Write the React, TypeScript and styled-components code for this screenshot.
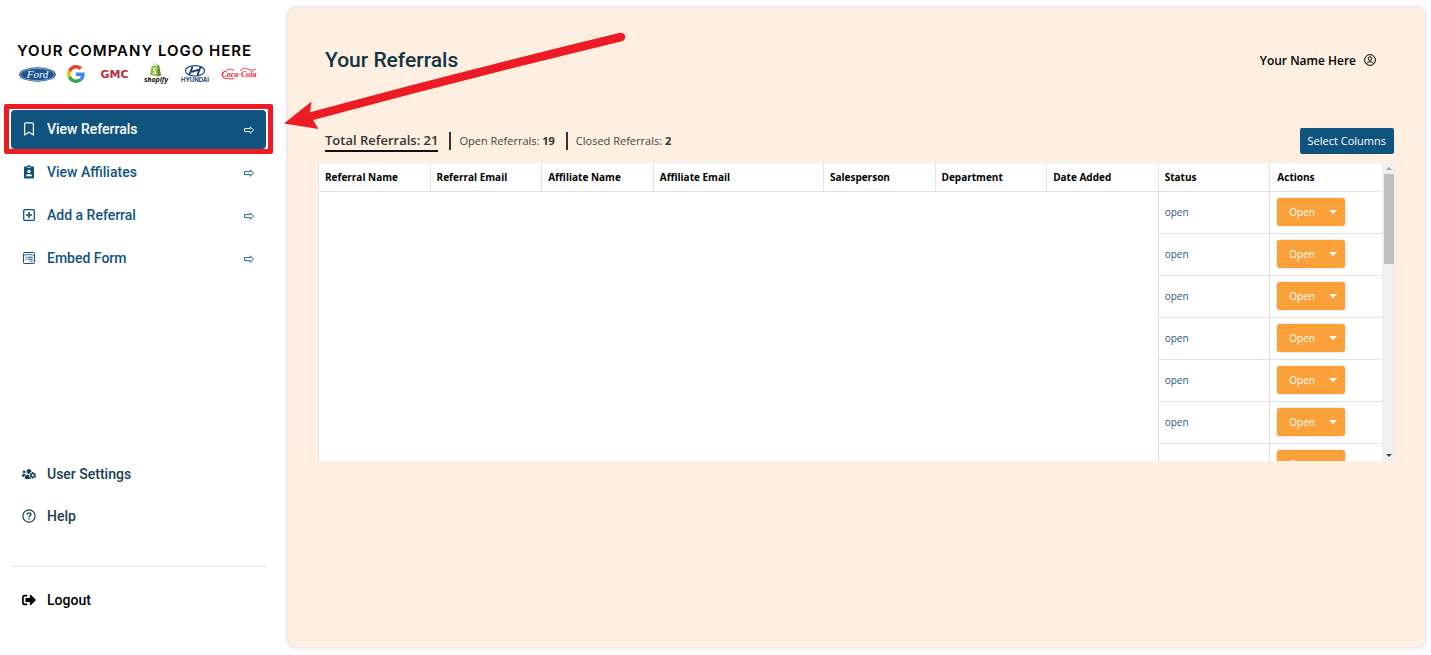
import React from "react";
import styled, { createGlobalStyle } from "styled-components";
import { FaUsersCog, FaSignOutAlt } from "react-icons/fa";

const GlobalStyle = createGlobalStyle`
  *, *::before, *::after { box-sizing: border-box; }
  body { margin: 0; background: #ffffff; font-family: "Open Sans", "Noto Sans", sans-serif; }
`;

const Page = styled.div`
  position: relative;
  display: flex;
  min-height: 100vh;
`;

const Sidebar = styled.aside`
  display: flex;
  flex-direction: column;
  flex: 0 0 288px;
  padding: 41px 22px 35px 11px;
`;

const Brand = styled.div`
  display: flex;
  flex-direction: column;
  gap: 2px;
  height: 69px;
  padding-left: 6px;
`;

const BrandName = styled.div`
  font: 600 15px/20px Inter, sans-serif;
  letter-spacing: 1px;
  color: #000000;
  white-space: nowrap;
`;

const BrandLogos = styled.div`
  display: flex;
  align-items: center;
  justify-content: space-between;
  height: 22px;
  padding: 0 9px 0 2px;
`;

const NavList = styled.nav<{ $bottom?: boolean }>`
  display: flex;
  flex-direction: column;
  gap: ${(p) => (p.$bottom ? 3 : 4)}px;
  margin-top: ${(p) => (p.$bottom ? "auto" : "0")};
`;

const NavItem = styled.a<{ $active?: boolean; $tone?: string }>`
  position: relative;
  display: flex;
  align-items: center;
  height: 39px;
  padding: 0 11px;
  border-radius: 4px;
  background: ${(p) => (p.$active ? "#11537f" : "transparent")};
  color: ${(p) => (p.$active ? "#ffffff" : p.$tone || "#11537f")};
  font: 500 14px/20px Roboto, sans-serif;
  text-decoration: none;
`;

const NavIcon = styled.span`
  display: flex;
  width: 14px;
  justify-content: center;
  margin-right: 11px;
  padding-bottom: 2px;
`;

const NavLabel = styled.span`
  flex: 1;
  padding-bottom: 2px;
`;

const Highlight = styled.span`
  position: absolute;
  inset: -6px -7px -5px -7px;
  border: 5px solid #ed1c24;
  border-radius: 2px;
  pointer-events: none;
`;

const Divider = styled.hr`
  width: 100%;
  margin: 30px 0 14px;
  border: 0;
  border-top: 1px solid #e6e6e6;
`;

const Main = styled.main`
  flex: 1;
  min-width: 0;
  margin: 8px 6px 8px 0;
  padding: 36px 30px;
  border-radius: 8px;
  background: #feefe0;
  box-shadow: 0 0 4px rgba(40, 40, 80, 0.25);
`;

const Header = styled.header`
  display: flex;
  align-items: center;
  justify-content: space-between;
  height: 32px;
  padding: 0 19px 0 7px;
`;

const Title = styled.h1`
  margin: 0;
  font: 500 21px/32px Roboto, sans-serif;
  color: #0f3446;
`;

const UserName = styled.div`
  display: flex;
  align-items: center;
  gap: 8px;
  font-size: 12px;
  font-weight: 600;
  color: #000000;
`;

const Toolbar = styled.div`
  display: flex;
  align-items: center;
  justify-content: space-between;
  height: 26px;
  margin: 52px 0 8px;
  padding: 0 1px 0 7px;
`;

const Stats = styled.div`
  display: flex;
  align-items: center;
`;

const Total = styled.strong`
  border-bottom: 2px solid #111111;
  font-size: 13px;
  font-weight: 600;
  line-height: 19px;
  color: #333333;
`;

const Stat = styled.span`
  margin-left: 11px;
  padding-left: 8px;
  border-left: 2px solid #333333;
  font-size: 11px;
  line-height: 18px;
  color: #444444;

  b { color: #333333; }
`;

const SelectColumns = styled.button`
  height: 26px;
  padding: 0 8px;
  border: 0;
  border-radius: 2px;
  background: #11537f;
  color: #ffffff;
  font: 400 11px/18px "Open Sans", sans-serif;
`;

const TableFrame = styled.div`
  display: flex;
  height: 299px;
`;

const TableViewport = styled.div`
  flex: 1;
  min-width: 0;
  overflow: hidden auto;
  scrollbar-width: none;
  background: #ffffff;
`;

const Table = styled.table`
  width: 100%;
  table-layout: fixed;
  border-collapse: separate;
  border-spacing: 0;
  border-left: 1px solid #e4e4e4;
  font-size: 10px;
`;

const Th = styled.th<{ $wide?: boolean }>`
  width: ${(p) => (p.$wide ? "16%" : "auto")};
  height: 30px;
  padding: 0 6px;
  border-right: 1px solid #e4e4e4;
  border-bottom: 1px solid #e4e4e4;
  border-top: 1px solid #ececec;
  font-size: 10px;
  text-align: left;
  color: #000000;
  white-space: nowrap;

  &:last-child { border-right: 0; padding-left: 7px; }
`;

const Td = styled.td`
  height: 42px;
  padding: 0 6px 2px;
  border-right: 1px solid #dedede;
  border-bottom: 1px solid #e4e4e4;
  color: #1f5a85;

  &:last-child { border-right: 0; padding-left: 7px; }
`;

const SplitButton = styled.div`
  display: flex;
  width: 68px;
  height: 28px;
  border-radius: 3px;
  background: #fba139;
  box-shadow: 0 0 2px rgba(0, 0, 0, 0.3);
`;

const SplitPart = styled.button<{ $grow?: boolean }>`
  display: flex;
  flex: ${(p) => (p.$grow ? "1" : "0 0 24px")};
  align-items: center;
  justify-content: ${(p) => (p.$grow ? "flex-start" : "center")};
  padding: ${(p) => (p.$grow ? "0 0 0 12px" : "0")};
  border: 0;
  background: none;
  color: #ffffff;
  font: 400 10px/16px "Open Sans", sans-serif;
`;

const ScrollTrack = styled.div`
  display: flex;
  flex-direction: column;
  align-items: center;
  width: 13px;
  background: #f0f0f0;
`;

const ScrollArrow = styled.span<{ $down?: boolean }>`
  display: flex;
  align-items: center;
  height: 12px;
  margin-top: ${(p) => (p.$down ? "auto" : "0")};
  color: ${(p) => (p.$down ? "#444444" : "#a0a0a0")};
`;

const ScrollThumb = styled.div`
  width: 10px;
  height: 90px;
  background: #c0c0c0;
`;

const Pointer = styled.svg`
  position: absolute;
  left: 284px;
  top: 30px;
  pointer-events: none;
`;

const ArrowRight = () => (
  <svg width="12" height="10" viewBox="0 0 12 10" fill="none" stroke="currentColor" strokeWidth="0.9" strokeLinejoin="miter" aria-hidden="true">
    <path d="M1.5 3.6H7.2V1.9L10.6 5.1L7.2 8.3V6.6H1.5Z" />
  </svg>
);

const Bookmark = () => (
  <svg width="12" height="14" viewBox="0 0 12 14" fill="none" stroke="currentColor" strokeWidth="1.2" strokeLinejoin="round" aria-hidden="true">
    <path d="M1.6 2C1.6 1.3 2 0.9 2.6 0.9H9.4C10 0.9 10.4 1.3 10.4 2V13L6 10.2L1.6 13Z" />
  </svg>
);

const Badge = () => (
  <svg width="12" height="14" viewBox="0 0 12 14" aria-hidden="true">
    <path d="M2 1.5H4.2V0.4H7.8V1.5H10C10.7 1.5 11 1.9 11 2.5V12.6C11 13.2 10.7 13.6 10 13.6H2C1.3 13.6 1 13.2 1 12.6V2.5C1 1.9 1.3 1.5 2 1.5Z" fill="currentColor" />
    <path d="M4.4 2.6H7.6" stroke="#ffffff" strokeWidth="0.8" />
    <circle cx="6" cy="6.4" r="1.7" fill="#ffffff" />
    <path d="M2.9 11.3C2.9 9.6 4.2 8.9 6 8.9S9.1 9.6 9.1 11.3Z" fill="#ffffff" />
  </svg>
);

const PlusSquare = () => (
  <svg width="12" height="12" viewBox="0 0 12 12" fill="none" stroke="currentColor" strokeWidth="1.3" aria-hidden="true">
    <rect x="0.7" y="0.7" width="10.6" height="10.6" rx="1" />
    <path d="M6 3V9M3 6H9" strokeWidth="1.6" />
  </svg>
);

const FormIcon = () => (
  <svg width="12" height="12" viewBox="0 0 12 12" fill="none" stroke="currentColor" strokeWidth="1" aria-hidden="true">
    <rect x="0.5" y="0.5" width="11" height="11" rx="1" />
    <path d="M1 3H4L5 2L6 3L7 2L8 3H11" strokeWidth="0.8" />
    <path d="M2.4 5.2H3.6M4.5 5.2H9.7M2.4 7.2H3.6M4.5 7.2H9.7M7 9.2H9.7" />
  </svg>
);

const HelpCircle = () => (
  <svg width="14" height="14" viewBox="0 0 14 14" fill="none" stroke="currentColor" strokeWidth="1.2" aria-hidden="true">
    <circle cx="7" cy="7" r="6.1" />
    <path d="M5.1 5.7C5.1 4.5 5.9 3.9 7 3.9C8.1 3.9 8.9 4.5 8.9 5.5C8.9 6.8 7 6.8 7 8.3" strokeWidth="1.4" />
    <path d="M7 9.2V10.6" strokeWidth="1.5" />
  </svg>
);

const UserCircle = () => (
  <svg width="12" height="12" viewBox="0 0 12 12" fill="none" stroke="currentColor" strokeWidth="1" aria-hidden="true">
    <circle cx="6" cy="6" r="5.4" />
    <circle cx="6" cy="4.6" r="1.8" />
    <path d="M2.6 9.8C3.2 8.2 4.4 7.8 6 7.8S8.8 8.2 9.4 9.8" />
  </svg>
);

const Caret = ({ up = false, size = 8 }: { up?: boolean; size?: number }) => (
  <svg width={size} height={size / 2} viewBox="0 0 8 4" fill="currentColor" aria-hidden="true">
    <path d={up ? "M0 4L4 0L8 4Z" : "M0 0H8L4 4Z"} />
  </svg>
);

const Ford = () => (
  <svg width="37" height="15" viewBox="0 0 37 15">
    <ellipse cx="18.5" cy="7.5" rx="18.3" ry="7.2" fill="#1d5592" />
    <ellipse cx="18.5" cy="7.5" rx="17" ry="6.1" fill="none" stroke="#c5d6e6" strokeWidth="0.6" />
    <text x="18.5" y="11" textAnchor="middle" fontFamily="Liberation Serif, serif" fontStyle="italic" fontWeight="400" fontSize="11" fill="#ffffff">Ford</text>
  </svg>
);

const Google = () => (
  <svg width="18" height="18" viewBox="0 0 48 48">
    <path fill="#EA4335" d="M24 9.5c3.54 0 6.71 1.22 9.21 3.6l6.85-6.85C35.9 2.38 30.47 0 24 0 14.62 0 6.51 5.38 2.56 13.22l7.98 6.19C12.43 13.72 17.74 9.5 24 9.5z" />
    <path fill="#4285F4" d="M46.98 24.55c0-1.57-.15-3.09-.38-4.55H24v9.02h12.94c-.58 2.96-2.26 5.48-4.78 7.18l7.73 6c4.51-4.18 7.09-10.36 7.09-17.65z" />
    <path fill="#FBBC05" d="M10.53 28.59c-.48-1.45-.76-2.99-.76-4.59s.27-3.14.76-4.59l-7.98-6.19C.92 16.46 0 20.12 0 24c0 3.88.92 7.54 2.56 10.78l7.97-6.19z" />
    <path fill="#34A853" d="M24 48c6.48 0 11.93-2.13 15.89-5.81l-7.73-6c-2.15 1.45-4.92 2.3-8.16 2.3-6.26 0-11.57-4.22-13.47-9.91l-7.98 6.19C6.51 42.62 14.62 48 24 48z" />
  </svg>
);

const Gmc = () => (
  <svg width="37" height="12" viewBox="0 0 37 12">
    <text x="18.5" y="10" textAnchor="middle" fontFamily="DejaVu Sans, sans-serif" fontWeight="700" fontSize="11" fill="#b5303c">GMC</text>
  </svg>
);

const Shopify = () => (
  <svg width="26" height="22" viewBox="0 0 26 22">
    <path d="M8.5 3.5L16 2L18 12.5L14.5 13.5L7 12Z" fill="#95bf47" />
    <path d="M15 2.2L16 2L18 12.5L14.5 13.5Z" fill="#5e8e3e" />
    <path d="M10 3.6C10.4 1.4 11.6 0.4 12.6 0.7C13.6 1 13.8 2 13.8 3" fill="none" stroke="#95bf47" strokeWidth="0.8" />
    <path d="M13.4 5.6C12 5 10.6 5.6 10.8 7C11 8.2 12.8 8.2 12.6 9.6C12.4 10.8 11 10.7 10.1 10" fill="none" stroke="#ffffff" strokeWidth="1.2" />
    <text x="13" y="19" textAnchor="middle" fontFamily="Open Sans, sans-serif" fontStyle="italic" fontWeight="700" fontSize="7" fill="#111111">shopify</text>
  </svg>
);

const Hyundai = () => (
  <svg width="30" height="18" viewBox="0 0 30 18">
    <ellipse cx="15" cy="5.8" rx="9.6" ry="5.2" fill="none" stroke="#1b3f77" strokeWidth="1.2" />
    <path d="M12.4 1.6C11.6 4.6 10.6 8 9 9.6M20.8 1.9C19.4 4 18.4 7.4 17.6 10.2M11 6.6C14 7 16 4.6 19 5" fill="none" stroke="#1b3f77" strokeWidth="1.9" />
    <text x="15" y="17.4" textAnchor="middle" fontFamily="Inter, sans-serif" fontWeight="700" fontSize="6" fill="#1b3f77">HYUNDAI</text>
  </svg>
);

const CocaCola = () => (
  <svg width="36" height="16" viewBox="0 0 36 16">
    <text x="18" y="11" textAnchor="middle" fontFamily="Liberation Serif, serif" fontStyle="italic" fontWeight="700" fontSize="8" fill="#e8202c">Coca-Cola</text>
    <path d="M4 5C0 8 1 13 5 12.4C8 12 9 13.6 13 12.6" fill="none" stroke="#e8202c" strokeWidth="0.9" />
    <path d="M5 5C7 2.4 10 2.6 13 4.4M19 5C22 1.6 25 2 28 3.6C30 4.6 33 4 35 2.8" fill="none" stroke="#e8202c" strokeWidth="0.9" />
  </svg>
);

const navItems = [
  { label: "View Referrals", icon: <Bookmark />, active: true },
  { label: "View Affiliates", icon: <Badge /> },
  { label: "Add a Referral", icon: <PlusSquare /> },
  { label: "Embed Form", icon: <FormIcon /> },
];

const columns = [
  "Referral Name",
  "Referral Email",
  "Affiliate Name",
  "Affiliate Email",
  "Salesperson",
  "Department",
  "Date Added",
  "Status",
  "Actions",
];

const rows = Array.from({ length: 7 }, (_, id) => ({ id, status: "open" }));

export default function App() {
  return (
    <Page>
      <GlobalStyle />
      <Sidebar>
        <Brand>
          <BrandName>YOUR COMPANY LOGO HERE</BrandName>
          <BrandLogos>
            <Ford />
            <Google />
            <Gmc />
            <Shopify />
            <Hyundai />
            <CocaCola />
          </BrandLogos>
        </Brand>
        <NavList aria-label="Main">
          {navItems.map((item) => (
            <NavItem key={item.label} href="#" $active={item.active}>
              <NavIcon>{item.icon}</NavIcon>
              <NavLabel>{item.label}</NavLabel>
              <ArrowRight />
              {item.active && <Highlight />}
            </NavItem>
          ))}
        </NavList>
        <NavList $bottom aria-label="Account">
          <NavItem href="#" $tone="#173f52">
            <NavIcon><FaUsersCog size={14} /></NavIcon>
            <NavLabel>User Settings</NavLabel>
          </NavItem>
          <NavItem href="#" $tone="#173f52">
            <NavIcon><HelpCircle /></NavIcon>
            <NavLabel>Help</NavLabel>
          </NavItem>
        </NavList>
        <Divider />
        <NavItem href="#" $tone="#000000">
          <NavIcon><FaSignOutAlt size={14} /></NavIcon>
          <NavLabel>Logout</NavLabel>
        </NavItem>
      </Sidebar>

      <Main>
        <Header>
          <Title>Your Referrals</Title>
          <UserName>
            Your Name Here
            <UserCircle />
          </UserName>
        </Header>
        <Toolbar>
          <Stats>
            <Total>Total Referrals: 21</Total>
            <Stat>Open Referrals: <b>19</b></Stat>
            <Stat>Closed Referrals: <b>2</b></Stat>
          </Stats>
          <SelectColumns type="button">Select Columns</SelectColumns>
        </Toolbar>
        <TableFrame>
          <TableViewport>
            <Table>
              <thead>
                <tr>
                  {columns.map((name) => (
                    <Th key={name} scope="col" $wide={name === "Affiliate Email"}>{name}</Th>
                  ))}
                </tr>
              </thead>
              <tbody>
                {rows.map((row, index) => (
                  <tr key={row.id}>
                    {index === 0 && <Td colSpan={7} rowSpan={rows.length} />}
                    <Td>{row.status}</Td>
                    <Td>
                      <SplitButton>
                        <SplitPart type="button" $grow>Open</SplitPart>
                        <SplitPart type="button" aria-label="More actions"><Caret /></SplitPart>
                      </SplitButton>
                    </Td>
                  </tr>
                ))}
              </tbody>
            </Table>
          </TableViewport>
          <ScrollTrack aria-hidden="true">
            <ScrollArrow><Caret up size={6} /></ScrollArrow>
            <ScrollThumb />
            <ScrollArrow $down><Caret size={6} /></ScrollArrow>
          </ScrollTrack>
        </TableFrame>
      </Main>

      <Pointer width="344" height="104" viewBox="0 0 344 104" aria-hidden="true">
        <path d="M337 7Q180 45 28 86" fill="none" stroke="#ed1c24" strokeWidth="8.5" strokeLinecap="round" />
        <path d="M0 93.5L27.5 71.5L26 83L29 90L34.5 99Z" fill="#ed1c24" />
      </Pointer>
    </Page>
  );
}
